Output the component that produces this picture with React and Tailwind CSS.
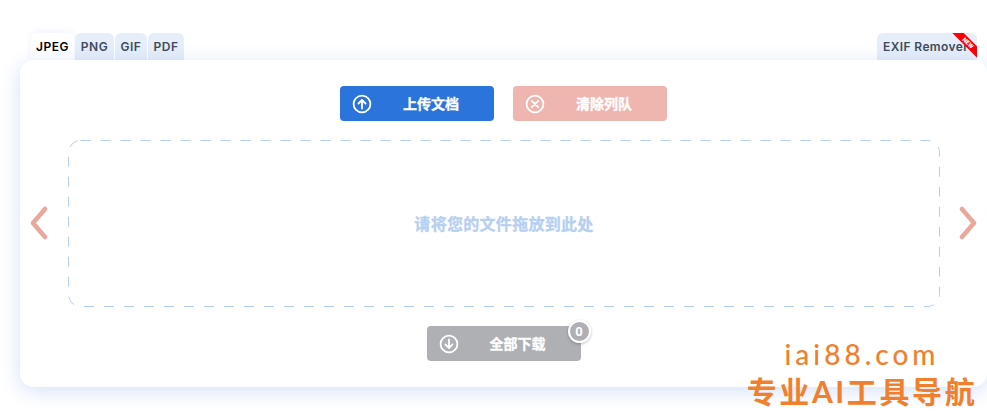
const TABS = [
  { label: 'JPEG', width: 'w-[43px]', active: true },
  { label: 'PNG', width: 'w-[39px]' },
  { label: 'GIF', width: 'w-[32px]' },
  { label: 'PDF', width: 'w-[36px]' },
]

function CircleIcon({ children }) {
  return (
    <svg width="20" height="20" viewBox="0 0 20 20" fill="none" stroke="currentColor" strokeWidth="1.8" strokeLinecap="round" strokeLinejoin="round">
      <circle cx="10" cy="10" r="8.4" />
      {children}
    </svg>
  )
}

function ActionButton({ color, icon, label }) {
  return (
    <button className={`relative flex h-[35px] w-[154px] items-center rounded-[4px] pl-[12px] text-white ${color}`}>
      {icon}
      <span className="ml-[31px] text-[14px] font-bold [-webkit-text-stroke:0.3px_white]">{label}</span>
    </button>
  )
}

function Chevron({ d }) {
  return (
    <svg className="-translate-y-px" width="18" height="34" viewBox="0 0 18 34" fill="none" stroke="#eca79c" strokeWidth="4.5" strokeLinecap="round" strokeLinejoin="round">
      <path d={d} />
    </svg>
  )
}

export default function App() {
  return (
    <div className="relative h-[418px] w-[987px] overflow-hidden bg-white pl-5 pt-[33px] font-['Inter','Noto_Sans_CJK_SC',sans-serif]">
      <div className="flex h-[27px] justify-between pl-[11px] pr-[10px]">
        <div className="flex gap-px">
          {TABS.map((t) => (
            <div
              key={t.label}
              className={`flex items-center justify-center rounded-t-[6px] text-[12px] font-semibold tracking-[0.5px] ${t.width} ${t.active ? 'bg-white text-black shadow-[0_-2px_6px_rgba(40,100,220,0.08)]' : 'bg-[#e6eef9] text-[#3f4a5c]'}`}
            >
              {t.label}
            </div>
          ))}
        </div>
        <div className="relative flex w-[100px] items-center overflow-hidden rounded-t-[6px] bg-[#e6eef9] pl-[6px] text-[12px] font-semibold tracking-[0.4px] whitespace-nowrap text-[#3f4a5c]">
          EXIF Remover
          <div className="absolute right-[-11px] top-[6px] h-[8px] w-[40px] rotate-45 bg-[#fb0007] text-center font-['Roboto',sans-serif] text-[6px] font-black leading-[8px] tracking-normal text-white">
            NEW
          </div>
        </div>
      </div>

      <div className="relative flex h-[327px] w-[967px] flex-col items-center rounded-[14px] bg-white pt-[26px] shadow-[0_4px_20px_rgba(40,100,220,0.2)]">
        <div className="flex gap-[19px]">
          <ActionButton
            color="bg-[#2a74dc]"
            label="上传文档"
            icon={<CircleIcon><path d="M10 14.5V6M6.5 9.5 10 6l3.5 3.5" /></CircleIcon>}
          />
          <ActionButton
            color="bg-[#efb6af]"
            label="清除列队"
            icon={<CircleIcon><path d="m6.8 6.8 6.4 6.4M13.2 6.8l-6.4 6.4" /></CircleIcon>}
          />
        </div>

        <div className="mt-[19px] flex w-full items-center pl-[10px]">
          <Chevron d="M15 3 3 17l12 14" />
          <div className="relative ml-[20px] flex h-[167px] w-[872px] items-center justify-center text-[16px] font-bold tracking-[0.3px] text-[#b6cff2] [-webkit-text-stroke:0.3px_#b6cff2]">
            <svg className="absolute inset-0" width="872" height="167" fill="none">
              <rect x="0.5" y="0.5" width="871" height="166" rx="12" stroke="#b4cdf0" strokeDasharray="10 10" />
            </svg>
            请将您的文件拖放到此处
          </div>
          <div className="ml-[19px]">
            <Chevron d="M3 3l12 14L3 31" />
          </div>
        </div>

        <div className="relative mt-[19px]">
          <ActionButton
            color="bg-[#aeb0b4]"
            label="全部下载"
            icon={<CircleIcon><path d="M10 5.5V14M6.5 10.5 10 14l3.5-3.5" /></CircleIcon>}
          />
          <span className="absolute right-[-10px] top-[-6px] flex h-[23px] w-[23px] items-center justify-center rounded-full border-2 border-white bg-[#aeb0b4] font-['Roboto',sans-serif] text-[13px] font-bold text-white shadow-[0_1px_3px_rgba(0,0,0,0.25)]">
            0
          </span>
        </div>
      </div>

      <div className="absolute left-[748px] top-[338px] flex w-[228px] flex-col items-center text-[#f07f2e]">
        <span className="font-['Lato',sans-serif] text-[28px] font-medium leading-[32px] tracking-[4px]">iai88.com</span>
        <span className="mt-[2px] font-['Lato','Noto_Sans_CJK_SC',sans-serif] text-[30px] font-bold leading-[38px] tracking-[2.6px] whitespace-nowrap">专业AI工具导航</span>
      </div>
    </div>
  )
}
